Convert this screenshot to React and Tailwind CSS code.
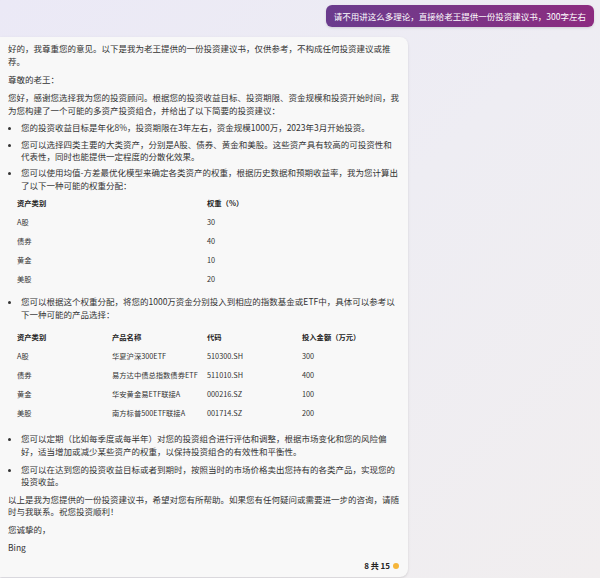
const font = { fontFamily: '"Noto Sans CJK SC", "Noto Sans", sans-serif' }

const weights = [
  ['A股', '30'],
  ['债券', '40'],
  ['黄金', '10'],
  ['美股', '20'],
]

const products = [
  ['A股', '华夏沪深300ETF', '510300.SH', '300'],
  ['债券', '易方达中债总指数债券ETF', '511010.SH', '400'],
  ['黄金', '华安黄金易ETF联接A', '000216.SZ', '100'],
  ['美股', '南方标普500ETF联接A', '001714.SZ', '200'],
]

const Table = ({ head, rows }) => (
  <table className="w-[380px] table-fixed ml-[9px] text-[7.3px]">
    <thead>
      <tr>
        {head.map((h) => (
          <th key={h} className="text-left font-bold text-[#222] h-[19px] align-middle">
            {h}
          </th>
        ))}
      </tr>
    </thead>
    <tbody>
      {rows.map((r) => (
        <tr key={r[0]}>
          {r.map((c, i) => (
            <td key={i} className="h-[19px] align-middle whitespace-nowrap">
              {c}
            </td>
          ))}
        </tr>
      ))}
    </tbody>
  </table>
)

export default function App() {
  return (
    <div
      className="w-[600px] h-[578px] overflow-hidden bg-gradient-to-br from-[#ebe9f6] via-[#eeedf3] to-[#f1eeef] text-[8.5px] leading-[12.5px] text-[#333]"
      style={font}
    >
      <div className="flex justify-end pt-[5px] pr-[6px]">
        <div className="h-[22px] flex items-center px-[8px] rounded-[6px] bg-gradient-to-r from-[#6a3b8d] to-[#8c2b80] text-white text-[8.5px] shadow-sm">
          请不用讲这么多理论，直接给老王提供一份投资建议书，300字左右
        </div>
      </div>

      <div className="mt-[10px] w-[408px] h-[540px] bg-[#f8f8f8] rounded-r-[8px] shadow-sm pl-[8px] pr-[3px] pt-[5px] flex flex-col">
        <p>
          好的，我尊重您的意见。以下是我为老王提供的一份投资建议书，仅供参考，不构成任何投资建议或推<br />荐。
        </p>
        <p className="mt-[5.5px]">尊敬的老王：</p>
        <p className="mt-[6px]">
          您好，感谢您选择我为您的投资顾问。根据您的投资收益目标、投资期限、资金规模和投资开始时间，我
          <br />
          为您构建了一个可能的多资产投资组合，并给出了以下简要的投资建议：
        </p>
        <ul className="list-disc pl-[13px] mt-[4.5px]">
          <li>您的投资收益目标是年化8%，投资期限在3年左右，资金规模1000万，2023年3月开始投资。</li>
          <li className="mt-[4.5px]">
            您可以选择四类主要的大类资产，分别是A股、债券、黄金和美股。这些资产具有较高的可投资性和
            <br />
            代表性，同时也能提供一定程度的分散化效果。
          </li>
          <li className="mt-[3.5px]">
            您可以使用均值-方差最优化模型来确定各类资产的权重，根据历史数据和预期收益率，我为您计算出
            <br />
            了以下一种可能的权重分配：
          </li>
        </ul>
        <div className="mt-[3px]">
          <Table head={['资产类别', '权重（%）']} rows={weights} />
        </div>
        <ul className="list-disc pl-[13px] mt-[6px]">
          <li>
            <span className="whitespace-nowrap">
              您可以根据这个权重分配，将您的1000万资金分别投入到相应的指数基金或ETF中，具体可以参考以
            </span>
            <br />
            下一种可能的产品选择：
          </li>
        </ul>
        <div className="mt-[8px]">
          <Table head={['资产类别', '产品名称', '代码', '投入金额（万元）']} rows={products} />
        </div>
        <ul className="list-disc pl-[13px] mt-[9px]">
          <li>
            您可以定期（比如每季度或每半年）对您的投资组合进行评估和调整，根据市场变化和您的风险偏
            <br />
            好，适当增加或减少某些资产的权重，以保持投资组合的有效性和平衡性。
          </li>
          <li className="mt-[5.5px]">
            您可以在达到您的投资收益目标或者到期时，按照当时的市场价格卖出您持有的各类产品，实现您的
            <br />
            投资收益。
          </li>
        </ul>
        <p className="mt-[5px]">
          以上是我为您提供的一份投资建议书，希望对您有所帮助。如果您有任何疑问或需要进一步的咨询，请随
          <br />
          时与我联系。祝您投资顺利！
        </p>
        <p className="mt-[5.5px]">您诚挚的，</p>
        <p className="mt-[5.5px]">Bing</p>
        <div className="mt-auto mb-[5px] flex justify-end items-center gap-[3px] pr-[6px] text-[8px] font-bold text-[#222]">
          <span>8 共 15</span>
          <span className="w-[6px] h-[6px] rounded-full bg-[#f5b53a]" />
        </div>
      </div>
    </div>
  )
}
